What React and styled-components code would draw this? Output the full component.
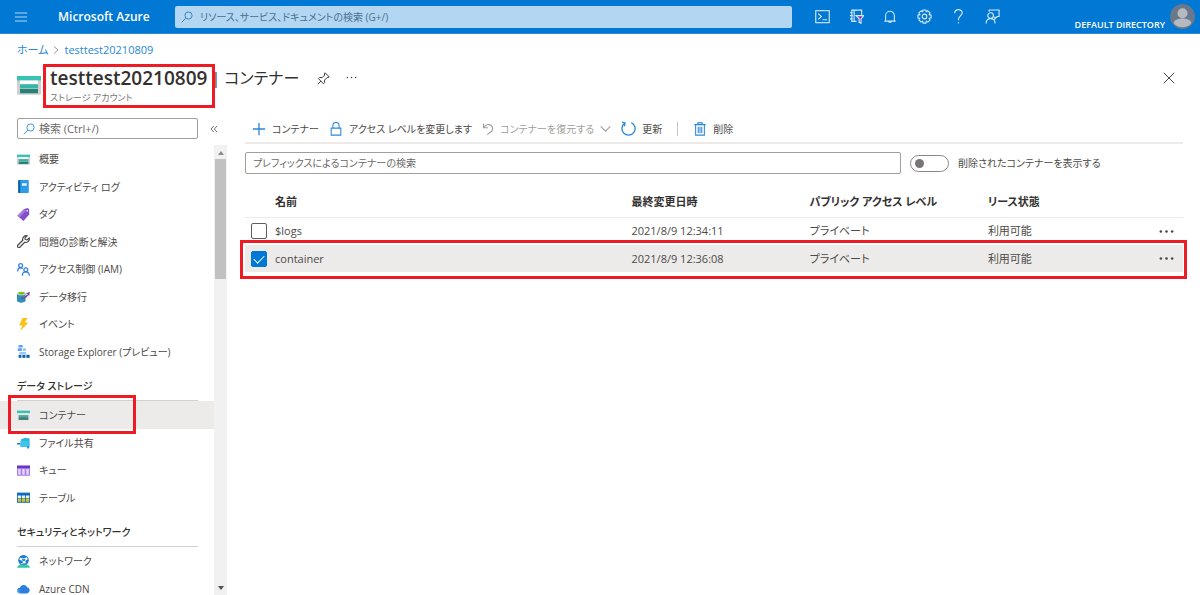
import React, { useState } from 'react';
import styled, { createGlobalStyle, css } from 'styled-components';

const GlobalStyle = createGlobalStyle`
  *,
  *::before,
  *::after {
    box-sizing: border-box;
  }

  body {
    margin: 0;
    background: #fff;
    color: #4c4a48;
    font-family: 'Open Sans', 'Noto Sans CJK JP', sans-serif;
    font-size: 11px;
    line-height: 16px;
    font-feature-settings: 'palt';
  }

  button,
  input {
    font: inherit;
    font-feature-settings: inherit;
    color: inherit;
  }

  button {
    padding: 0;
    border: 0;
    background: none;
  }

  a {
    color: #2b88d8;
    text-decoration: none;
  }

  svg {
    display: block;
    flex: none;
  }
`;

const Page = styled.div`
  display: flex;
  flex-direction: column;
  height: 100vh;
  overflow: hidden;
`;

const TopBar = styled.header`
  display: flex;
  flex: none;
  align-items: center;
  height: 34px;
  background: #0078d4;
  border-bottom: 1px solid #2b88d8;
  color: #fff;
`;

const HamburgerButton = styled.button`
  display: flex;
  margin-left: 14px;
  color: #b3d7f2;
`;

const Brand = styled.a`
  flex: 0 0 117px;
  margin-left: 30px;
  color: #fff;
  font-size: 12px;
  font-weight: 600;
  white-space: nowrap;
`;

const GlobalSearch = styled.label`
  display: flex;
  flex: 1;
  align-items: center;
  gap: 7px;
  height: 22px;
  padding: 0 6px;
  border-radius: 2px;
  background: #b3d6f2;
  color: #3579b5;
  font-size: 10px;

  input {
    flex: 1;
    min-width: 0;
    padding: 0;
    border: 0;
    outline: 0;
    background: none;
  }

  input::placeholder {
    color: #4a6f8f;
    opacity: 1;
  }
`;

const HeaderTools = styled.div`
  display: flex;
  margin-left: 13px;
`;

const HeaderButton = styled.button`
  display: flex;
  align-items: center;
  justify-content: center;
  width: 34px;
  height: 32px;
  color: #d4e9fa;
`;

const Account = styled.button`
  display: flex;
  flex: 0 0 191px;
  align-items: center;
  justify-content: flex-end;
  gap: 5px;
  padding-right: 5px;
  color: #fff;
  font-size: 9px;
  font-weight: 600;

  span {
    padding-top: 16px;
  }
`;

const BladeHeader = styled.div`
  flex: none;
  padding: 8px 17px 0;
`;

const Breadcrumb = styled.nav`
  display: flex;
  align-items: center;
  gap: 4px;
  color: #8a8886;
`;

const TitleRow = styled.div`
  display: flex;
  height: 60px;
  padding-top: 6px;
`;

const ResourceIcon = styled.div`
  width: 24px;
  margin-right: 9px;
  padding-top: 9px;
`;

const TitleBlock = styled.div`
  h1 {
    position: relative;
    display: flex;
    gap: 4px;
    margin: 0;
    color: #323130;
    font-size: 19px;
    font-weight: 400;
    line-height: 28px;
  }

  strong {
    font-weight: 600;
  }

  span {
    font-size: 16px;
  }

  p {
    margin: 0;
    color: #797775;
    font-size: 9px;
    line-height: 12px;
  }
`;

/* red frame laid over the part of the page being pointed out */
const highlight = css`
  content: '';
  position: absolute;
  z-index: 1;
  border: 3px solid #ed1c24;
  pointer-events: none;
`;

const Highlighted = styled.strong`
  &::after {
    ${highlight}
    top: 0;
    left: -7px;
    width: 172px;
    height: 44px;
  }
`;

const TitleAction = styled.button`
  display: flex;
  align-self: flex-start;
  margin: 8px 0 0 ${(props) => props.$gap || 0}px;
  color: #323130;
`;

const CloseButton = styled(TitleAction)`
  margin-left: auto;
  margin-right: 8px;
`;

const Columns = styled.div`
  display: flex;
  flex: 1;
  min-height: 0;
`;

const Sidebar = styled.aside`
  display: flex;
  flex: none;
  flex-direction: column;
  width: 227px;
`;

const MenuSearchRow = styled.div`
  display: flex;
  align-items: center;
  gap: 12px;
  padding-left: 17px;
  margin-bottom: 6px;
  color: #605e5c;
`;

const MenuSearch = styled.label`
  display: flex;
  align-items: center;
  gap: 4px;
  width: 181px;
  height: 21px;
  padding: 0 5px;
  border: 1px solid #a19f9d;
  border-radius: 2px;
  color: #2b88d8;

  input {
    flex: 1;
    min-width: 0;
    padding: 0;
    border: 0;
    outline: 0;
    background: none;
  }

  input::placeholder {
    color: #6b6967;
    opacity: 1;
  }
`;

const MenuScroller = styled.div`
  display: flex;
  flex: 1;
  min-height: 0;
`;

const Menu = styled.nav`
  flex: 1;
  overflow: hidden;
  font-size: 10px;

  ul {
    margin: 0;
    padding: 0;
    list-style: none;
  }

  li:nth-child(odd) a {
    height: 28px;
  }
`;

const MenuHeading = styled.h2`
  height: 36px;
  margin: 0 16px 0 17px;
  padding-top: 13px;
  border-bottom: 1px solid #d2d0ce;
  color: #323130;
  font-size: 10px;
  font-weight: 500;
`;

const MenuLink = styled.a`
  position: relative;
  display: flex;
  align-items: center;
  gap: 9px;
  height: 27px;
  padding-left: 17px;
  background: ${(props) => (props.$active ? '#edebe9' : 'transparent')};
  color: #4c4a48;
  white-space: nowrap;

  ${(props) =>
    props.$active &&
    css`
      &::after {
        ${highlight}
        inset: -6px 78px -5px 8px;
      }
    `}
`;

const Scrollbar = styled.div`
  display: flex;
  flex-direction: column;
  justify-content: space-between;
  align-items: center;
  width: 13px;
  padding: 6px 0 5px;
  background: #f1f1f1;
  color: #505050;
`;

const Thumb = styled.div`
  width: 11px;
  height: 120px;
  margin: 4px 0 auto;
  background: #c1c1c1;
`;

const Main = styled.main`
  flex: 1;
  min-width: 0;
  padding: 0 17px 0 18px;
`;

const CommandBar = styled.div`
  display: flex;
  align-items: center;
  height: 26px;
  padding: 0 0 3px 7px;
  border-bottom: 2px solid #edebe9;
  font-size: 10px;
`;

const Command = styled.button`
  display: flex;
  align-items: center;
  gap: 6px;
  margin-right: 10px;
  white-space: nowrap;

  svg {
    color: #2b88d8;
  }

  &:disabled,
  &:disabled svg {
    color: #a19f9d;
  }
`;

const Separator = styled.span`
  width: 1px;
  height: 14px;
  margin: 0 15px 0 5px;
  background: #c8c6c4;
`;

const FilterRow = styled.div`
  display: flex;
  align-items: center;
  gap: 9px;
  padding-top: 8px;
  font-size: 10px;
`;

const PrefixInput = styled.input`
  flex: 1;
  min-width: 0;
  height: 22px;
  padding: 0 7px;
  border: 1px solid #a19f9d;
  border-radius: 2px;

  &::placeholder {
    color: #6b6967;
    opacity: 1;
  }
`;

const ToggleLabel = styled.label`
  display: flex;
  flex: 0 0 273px;
  align-items: center;
  gap: 9px;
`;

const Toggle = styled.input`
  appearance: none;
  display: flex;
  align-items: center;
  justify-content: ${(props) => (props.checked ? 'flex-end' : 'flex-start')};
  width: 39px;
  height: 17px;
  margin: 0;
  padding: 0 4px;
  border: 1px solid #8a8886;
  border-radius: 9px;

  &::before {
    content: '';
    width: 9px;
    height: 9px;
    border-radius: 50%;
    background: #797775;
  }
`;

const ContainerTable = styled.table`
  width: 100%;
  margin-top: 14px;
  border-collapse: collapse;
  table-layout: fixed;

  th,
  td {
    padding: 0;
    text-align: left;
  }

  th {
    height: 29px;
    color: #323130;
    font-weight: 600;
  }

  col.check {
    width: 30px;
  }

  col.name {
    width: 38%;
  }

  col.detail {
    width: 19%;
  }

  col.more {
    width: 40px;
  }
`;

const HeadRow = styled.tr`
  border-bottom: 1px solid #edebe9;
`;

const Row = styled.tr`
  position: relative;
  height: ${(props) => (props.$selected ? 27 : 28)}px;
  background: ${(props) => (props.$selected ? '#edebe9' : 'transparent')};

  ${(props) =>
    props.$selected &&
    css`
      td:first-child::after {
        ${highlight}
        inset: -5px -4px -7px -5px;
      }
    `}
`;

const Checkbox = styled.input`
  appearance: none;
  display: flex;
  justify-content: center;
  width: 16px;
  height: 16px;
  margin: 0 0 0 6px;
  border: 1px solid #605e5c;
  border-radius: 2px;

  &:checked {
    border-color: #0078d4;
    background: #0078d4;
  }

  &:checked::before {
    content: '';
    width: 6px;
    height: 10px;
    margin-top: 1px;
    border: solid #fff;
    border-width: 0 1px 1px 0;
    transform: rotate(45deg);
  }
`;

const MoreCell = styled.td`
  button {
    display: flex;
    margin-left: auto;
    margin-right: 9px;
  }
`;

const Svg = ({ size = 13, view = 16, children, ...rest }) => (
  <svg
    width={size}
    height={size}
    viewBox={`0 0 ${view} ${view}`}
    fill="none"
    stroke="currentColor"
    strokeWidth="1.2"
    aria-hidden="true"
    {...rest}
  >
    {children}
  </svg>
);

const SearchIcon = () => (
  <Svg size={12}>
    <circle cx="10" cy="6" r="4.8" />
    <path d="M6.5 9.5 1 15" />
  </Svg>
);

const StorageIcon = ({ size = 13 }) => (
  <Svg size={size} stroke="none">
    <path d="M0 4h16v9.500a1 1 0 0 1-1 1H1a1 1 0 0 1-1-1z" fill="#d0d0d0" />
    <path d="M0 2h16v3H0z" fill="#37c2b1" />
    <path d="M2 5h12v2.500H2z" fill="#fff" />
    <path d="M2 7.500h12V10H2z" fill="#37b5a6" />
    <path d="M2 10.500h12v3H2z" fill="#258277" />
  </Svg>
);

const ContainerIcon = () => (
  <Svg stroke="none">
    <path d="M0 2h16v3.200H0z" fill="#37c2b1" />
    <path d="M0 5.200h16V14H0z" fill="#e6e6e6" />
    <path d="M2 7.500h12v2.500H2z" fill="#4fa79c" />
    <path d="M2 10h12v3.500H2z" fill="#3f8079" />
  </Svg>
);

const LogIcon = () => (
  <Svg stroke="none">
    <rect x="1.500" y="0" width="13" height="16" rx="1" fill="#2f9be8" />
    <path d="M1.500 1a1 1 0 0 1 1-1H4v16H2.500a1 1 0 0 1-1-1z" fill="#0c5fae" />
    <rect x="6" y="4" width="6" height="3" fill="#eaf5fd" />
  </Svg>
);

const TagIcon = () => (
  <Svg stroke="none">
    <path d="M8.500 1.500 13 0l2 1.500V8l-7 8-7.500-6.500z" fill="#8450c9" />
    <path d="m8.500 1.500-8 8L3 12l8-9z" fill="#a67be0" />
    <circle cx="12.500" cy="3.500" r="1" fill="#fff" />
  </Svg>
);

const WrenchIcon = () => (
  <Svg strokeWidth="1.500">
    <path d="M15 3.500 12.500 6 10.200 5.600 9.800 3.500 12.400 1A4.400 4.400 0 0 0 7.100 6.500L1 12.600a1.700 1.700 0 0 0 2.400 2.400L9.500 9A4.400 4.400 0 0 0 15 3.500z" />
  </Svg>
);

const PeopleIcon = () => (
  <Svg stroke="#2f7de1" strokeWidth="1.500">
    <circle cx="4.500" cy="3.200" r="2.400" />
    <path d="M.8 10.500c0-3 1.500-4.600 3.700-4.600 1 0 1.800.3 2.500 1" />
    <circle cx="10.800" cy="8.300" r="2.400" />
    <path d="M6.500 15.800c0-3.200 1.700-5 4.300-5s4.400 1.800 4.400 5" />
  </Svg>
);

const MigrationIcon = () => (
  <Svg stroke="none">
    <path d="M0 4v9c0 3.500 10.500 3.500 10.500 0V4z" fill="#2f8fb8" />
    <ellipse cx="5.500" cy="4" rx="5.300" ry="2.500" fill="#d0e7f0" />
    <ellipse cx="5.500" cy="4" rx="4" ry="1.600" fill="#7fba00" />
    <path d="M5 10c4 1 6-1 8-4" stroke="#804998" strokeWidth="2" />
    <path d="m11 4 5-2-1 5.500z" fill="#804998" />
  </Svg>
);

const BoltIcon = () => (
  <Svg stroke="none">
    <path d="M7 0h6L9.500 5.500H14L4 16l2.500-7H2.500z" fill="#fbc013" />
  </Svg>
);

const ExplorerIcon = () => (
  <Svg stroke="none">
    <path d="M2 0h5v3H2zM1 4h5v3.500H1z" fill="#5ea0ef" />
    <path d="M7 4h4v3.500H7zM3 8.500h8V11H3z" fill="#9cc6f5" />
    <path d="M2 12h13.500v3.800H2z" fill="#0c60ad" />
    <path d="M6 12v4M11 12v4" stroke="#fff" />
  </Svg>
);

const FileShareIcon = () => (
  <Svg stroke="none">
    <path d="m5 4 5-2 5.500 1v11L5 12.500z" fill="#2fb4e0" />
    <path d="M4 6h10v7.500H4z" fill="#3fc4ec" />
    <path d="M0 9.500h4M13.500 13v2.500" stroke="#1787b8" strokeWidth="2" />
  </Svg>
);

const QueueIcon = () => (
  <Svg stroke="none">
    <path d="M0 2h16v12.500H0z" fill="#a87be8" />
    <path d="M0 2h16v3H0z" fill="#6a35c0" />
    <path d="M1.500 6.200h3v7h-3zM6.500 6.200h3v7h-3zM11.500 6.200h3v7h-3z" fill="#e6d8fb" />
  </Svg>
);

const TableIcon = () => (
  <Svg stroke="none">
    <path d="M0 2h16v12.500H0z" fill="#0f6cbd" />
    <path d="M1 5.500h4v3H1zM6 5.500h4v3H6zM11 5.500h4v3h-4z" fill="#e9f4fc" />
    <path d="M1 9.200h4v4H1zM6 9.200h4v4H6zM11 9.200h4v4h-4z" fill="#d8c42c" />
  </Svg>
);

const NetworkIcon = () => (
  <Svg stroke="none">
    <circle cx="8" cy="6.500" r="6.500" fill="#1f7cd4" />
    <path d="m4 5 5 4 3-5-8 1zM9 9l-4 2" stroke="#d3ebff" />
    <circle cx="4.500" cy="5" r="1.500" fill="#fff" />
    <circle cx="11.500" cy="4.500" r="1.500" fill="#fff" />
    <circle cx="9" cy="9" r="1.600" fill="#fff" />
    <path d="M0 15.800c1-3 3-4 5-4h6c2 0 4 1 5 4z" fill="#32c8a4" />
  </Svg>
);

const CloudIcon = () => (
  <Svg stroke="none">
    <path d="M4 14a3.500 3.500 0 0 1-.5-7A4.800 4.800 0 0 1 12.500 6.500 3.800 3.800 0 0 1 12.500 14z" fill="#2d7fdc" />
    <path d="M0 10h3M1 12.500h3" stroke="#73b5f5" />
  </Svg>
);

const ShellIcon = () => (
  <Svg size={15}>
    <rect x=".8" y="1.800" width="14.400" height="12.800" />
    <path d="m3.500 5 3.300 3-3.300 3M8 11.500h5" />
  </Svg>
);

const DirectoryFilterIcon = () => (
  <Svg size={15}>
    <path d="M13.500 6V1.200H3v12h5M5.500 1.200v12M1 4h3M1 7h3M1 10.500h3" />
    <path d="M7.500 7h8.300l-3 3.500v4.700l-2-1v-3.700z" fill="#9b2fae" />
  </Svg>
);

const BellIcon = () => (
  <Svg size={14}>
    <path d="M3 12.500V6.500a5 5 0 0 1 10 0v6M1.500 12.700h13M6.200 13a1.900 1.900 0 0 0 3.600 0" />
  </Svg>
);

const GearIcon = () => (
  <Svg size={15}>
    <path
      strokeLinejoin="round"
      d="M6.500 1h3l.4 2 1.700-1.100 2.400 2.300L12.900 6l2.100.5v3l-2.100.4 1.100 1.800-2.400 2.300-1.700-1.100-.4 2.100h-3l-.4-2.100L4.400 14 2 11.700l1.100-1.800L1 9.500v-3L3.100 6 2 4.200l2.400-2.300L6.100 3z"
    />
    <circle cx="8" cy="8" r="2.500" />
  </Svg>
);

const HelpIcon = () => (
  <Svg size={15}>
    <path d="M4 4.500c0-5 8-5 8-.3C12 7 8 7.500 8 10.800V12M8 14v1.500" />
  </Svg>
);

const FeedbackIcon = () => (
  <Svg size={15}>
    <circle cx="6" cy="7" r="3" />
    <path d="M1.200 15.500c0-3.500 2-5.300 4.800-5.300s4.800 1.800 4.800 5.300M4.500 3V1H15v7h-2l-2.500 2.500V8" />
  </Svg>
);

const AvatarIcon = () => (
  <Svg size={25} view={24} stroke="none">
    <circle cx="12" cy="12" r="12" fill="#69788a" />
    <circle cx="12" cy="8.800" r="4.800" fill="#b5bac0" />
    <path d="M3.500 18.500c0-6 17-6 17 0C17 23.500 7 23.500 3.500 18.500z" fill="#b5bac0" />
  </Svg>
);

const PinIcon = () => (
  <Svg>
    <path d="m10 1 5 5-1.500 1-1-.3-3.300 3.300.2 3L8 14.500 1.800 8.200 3.200 6.800l3.100.2 3.200-3.200L9 2.500zM4.800 11.200 1 15" />
  </Svg>
);

const MoreIcon = ({ size = 15, r = 1.4 }) => (
  <Svg size={size} stroke="none" fill="currentColor">
    <circle cx="2" cy="8" r={r} />
    <circle cx="8" cy="8" r={r} />
    <circle cx="14" cy="8" r={r} />
  </Svg>
);

const menuGroups = [
  {
    items: [
      { label: '概要', icon: StorageIcon },
      { label: 'アクティビティ ログ', icon: LogIcon },
      { label: 'タグ', icon: TagIcon },
      { label: '問題の診断と解決', icon: WrenchIcon },
      { label: 'アクセス制御 (IAM)', icon: PeopleIcon },
      { label: 'データ移行', icon: MigrationIcon },
      { label: 'イベント', icon: BoltIcon },
      { label: 'Storage Explorer (プレビュー)', icon: ExplorerIcon },
    ],
  },
  {
    heading: 'データ ストレージ',
    items: [
      { label: 'コンテナー', icon: ContainerIcon, active: true },
      { label: 'ファイル共有', icon: FileShareIcon },
      { label: 'キュー', icon: QueueIcon },
      { label: 'テーブル', icon: TableIcon },
    ],
  },
  {
    heading: 'セキュリティとネットワーク',
    items: [
      { label: 'ネットワーク', icon: NetworkIcon },
      { label: 'Azure CDN', icon: CloudIcon },
    ],
  },
];

const headerTools = [
  { label: 'Cloud Shell', icon: ShellIcon },
  { label: 'ディレクトリとサブスクリプション', icon: DirectoryFilterIcon },
  { label: '通知', icon: BellIcon },
  { label: '設定', icon: GearIcon },
  { label: 'ヘルプ', icon: HelpIcon },
  { label: 'フィードバック', icon: FeedbackIcon },
];

const containers = [
  { name: '$logs', modified: '2021/8/9 12:34:11', access: 'プライベート', lease: '利用可能' },
  { name: 'container', modified: '2021/8/9 12:36:08', access: 'プライベート', lease: '利用可能' },
];

const Header = () => (
  <TopBar>
    <HamburgerButton aria-label="メニュー">
      <Svg size={14}>
        <path d="M1 3.500h14M1 8h14M1 12.500h14" />
      </Svg>
    </HamburgerButton>
    <Brand href="#">Microsoft Azure</Brand>
    <GlobalSearch>
      <SearchIcon />
      <input aria-label="リソースの検索" placeholder="リソース、サービス、ドキュメントの検索 (G+/)" />
    </GlobalSearch>
    <HeaderTools>
      {headerTools.map(({ label, icon: Icon }) => (
        <HeaderButton key={label} aria-label={label}>
          <Icon />
        </HeaderButton>
      ))}
    </HeaderTools>
    <Account>
      <span>DEFAULT DIRECTORY</span>
      <AvatarIcon />
    </Account>
  </TopBar>
);

const ResourceMenu = () => (
  <Sidebar>
    <MenuSearchRow>
      <MenuSearch>
        <SearchIcon />
        <input aria-label="メニューの検索" placeholder="検索 (Ctrl+/)" />
      </MenuSearch>
      <button aria-label="折りたたむ">
        <Svg size={8}>
          <path strokeWidth="1.800" d="M7.500 2 2 8l5.500 6M14 2 8.500 8l5.500 6" />
        </Svg>
      </button>
    </MenuSearchRow>
    <MenuScroller>
      <Menu>
        {menuGroups.map((group, index) => (
          <React.Fragment key={index}>
            {group.heading && <MenuHeading>{group.heading}</MenuHeading>}
            <ul>
              {group.items.map(({ label, icon: Icon, active }) => (
                <li key={label}>
                  <MenuLink href="#" $active={active}>
                    <Icon />
                    {label}
                  </MenuLink>
                </li>
              ))}
            </ul>
          </React.Fragment>
        ))}
      </Menu>
      <Scrollbar aria-hidden="true">
        <svg width="6" height="4" viewBox="0 0 6 4" fill="#8a8a8a"><path d="M0 4h6L3 0z" /></svg>
        <Thumb />
        <svg width="6" height="4" viewBox="0 0 6 4" fill="currentColor"><path d="M0 0h6L3 4z" /></svg>
      </Scrollbar>
    </MenuScroller>
  </Sidebar>
);

const Commands = () => (
  <CommandBar>
    <Command>
      <Svg size={14} strokeWidth="1.500">
        <path d="M8 1v14M1 8h14" />
      </Svg>
      コンテナー
    </Command>
    <Command>
      <Svg size={14}>
        <path d="M2.500 7h11v8h-11zM4.500 7V4a3.500 3.500 0 0 1 7 0v3" />
      </Svg>
      アクセス レベルを変更します
    </Command>
    <Command disabled>
      <Svg size={12}>
        <path strokeWidth="1.500" d="M2 .5v5.800h6M2.300 6C5 2 8 1.500 10.500 2.500c5 2 4.500 7 1 9.500L7 15.500" />
      </Svg>
      コンテナーを復元する
      <Svg size={11} strokeWidth="1.600">
        <path d="m1 5 7 7 7-7" />
      </Svg>
    </Command>
    <Command>
      <Svg size={15}>
        <path strokeWidth="1.400" d="M11 1.700A7 7 0 1 1 4 2.300M1 1.200l3.400 1L3.500 5.800" />
      </Svg>
      更新
    </Command>
    <Separator />
    <Command>
      <Svg size={14}>
        <path d="M1.500 3h13M5.500 3V1h5v2M3 3v12h10V3M6 5.500v7M8 5.500v7M10 5.500v7" />
      </Svg>
      削除
    </Command>
  </CommandBar>
);

const ContainerList = () => {
  const [selected, setSelected] = useState(['container']);

  const toggleRow = (name) => {
    setSelected((current) =>
      current.includes(name) ? current.filter((item) => item !== name) : [...current, name]
    );
  };

  return (
    <ContainerTable>
      <colgroup>
        <col className="check" />
        <col className="name" />
        <col className="detail" />
        <col className="detail" />
        <col />
        <col className="more" />
      </colgroup>
      <thead>
        <HeadRow>
          <th aria-label="選択" />
          <th>名前</th>
          <th>最終変更日時</th>
          <th>パブリック アクセス レベル</th>
          <th>リース状態</th>
          <th aria-label="操作" />
        </HeadRow>
      </thead>
      <tbody>
        {containers.map((item) => (
          <Row key={item.name} $selected={selected.includes(item.name)}>
            <td>
              <Checkbox
                type="checkbox"
                aria-label={item.name}
                checked={selected.includes(item.name)}
                onChange={() => toggleRow(item.name)}
              />
            </td>
            <td>{item.name}</td>
            <td>{item.modified}</td>
            <td>{item.access}</td>
            <td>{item.lease}</td>
            <MoreCell>
              <button aria-label="その他">
                <MoreIcon />
              </button>
            </MoreCell>
          </Row>
        ))}
      </tbody>
    </ContainerTable>
  );
};

const App = () => {
  const [showDeleted, setShowDeleted] = useState(false);

  return (
    <>
      <GlobalStyle />
      <Page>
        <Header />
        <BladeHeader>
          <Breadcrumb>
            <a href="#">ホーム</a>
            <Svg size={8}>
              <path strokeWidth="1.800" d="m4 1 8 7-8 7" />
            </Svg>
            <a href="#">testtest20210809</a>
          </Breadcrumb>
          <TitleRow>
            <ResourceIcon>
              <StorageIcon size={24} />
            </ResourceIcon>
            <TitleBlock>
              <h1>
                <Highlighted>testtest20210809</Highlighted>
                <span>| コンテナー</span>
              </h1>
              <p>ストレージ アカウント</p>
            </TitleBlock>
            <TitleAction aria-label="ピン留め" $gap={18}>
              <PinIcon />
            </TitleAction>
            <TitleAction aria-label="その他" $gap={16}>
              <MoreIcon size={11} r={1} />
            </TitleAction>
            <CloseButton aria-label="閉じる">
              <Svg size={12}>
                <path d="m1 1 14 14M15 1 1 15" />
              </Svg>
            </CloseButton>
          </TitleRow>
        </BladeHeader>
        <Columns>
          <ResourceMenu />
          <Main>
            <Commands />
            <FilterRow>
              <PrefixInput
                aria-label="コンテナーの検索"
                placeholder="プレフィックスによるコンテナーの検索"
              />
              <ToggleLabel>
                <Toggle
                  type="checkbox"
                  role="switch"
                  checked={showDeleted}
                  onChange={() => setShowDeleted(!showDeleted)}
                />
                削除されたコンテナーを表示する
              </ToggleLabel>
            </FilterRow>
            <ContainerList />
          </Main>
        </Columns>
      </Page>
    </>
  );
};

export default App;
